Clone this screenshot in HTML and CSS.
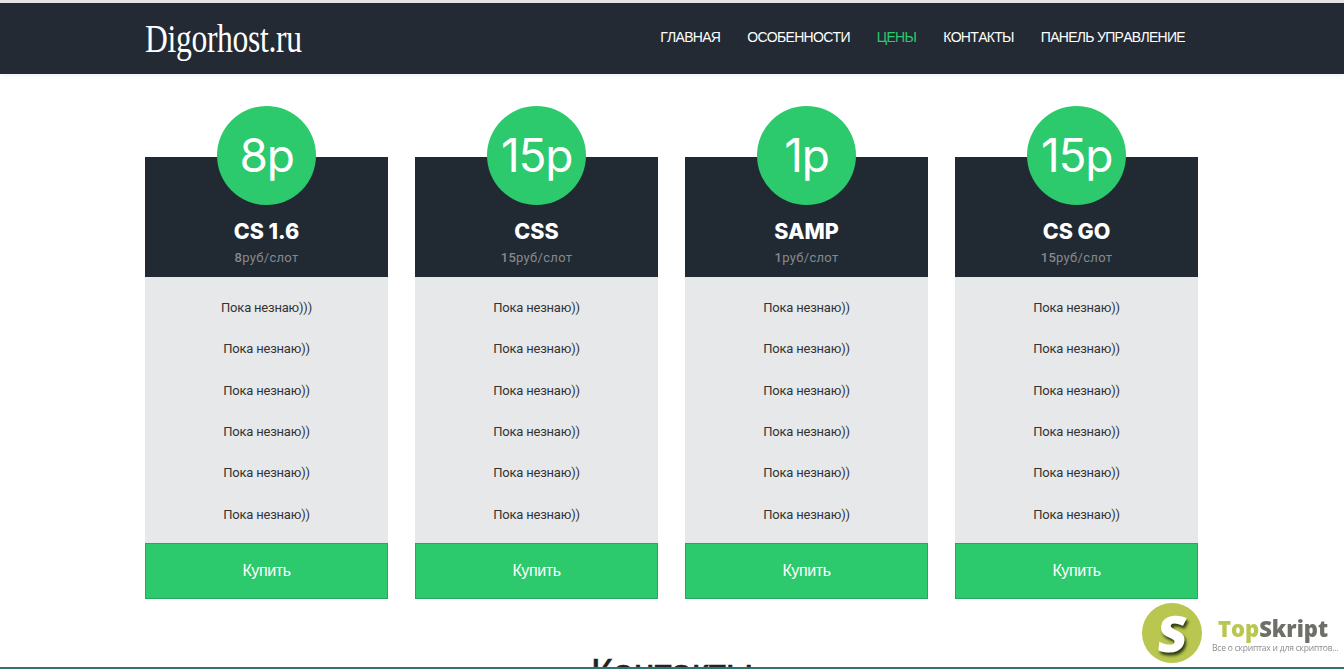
FILE: index.html
```html
<!DOCTYPE html>
<html lang="en">

<head>
    <meta charset="UTF-8">
    <meta name="viewport" content="width=device-width, initial-scale=1.0">
    <title>Digorhost.ru</title>
    <link rel="stylesheet" href="styles.css">
</head>

<body>
    <header class="header">
        <div class="wrap header-row">
            <a href="#" class="logo">Digorhost.ru</a>
            <nav class="menu">
                <a href="#">ГЛАВНАЯ</a>
                <a href="#">ОСОБЕННОСТИ</a>
                <a href="#" class="active">ЦЕНЫ</a>
                <a href="#">КОНТАКТЫ</a>
                <a href="#">ПАНЕЛЬ УПРАВЛЕНИЕ</a>
            </nav>
        </div>
    </header>

    <section class="wrap prices">
        <div class="plan">
            <div class="plan-head">
                <div class="price">8р</div>
                <h3>CS 1.6</h3>
                <p><b>8</b>руб/слот</p>
            </div>
            <ul>
                <li>Пока незнаю)))</li>
                <li>Пока незнаю))</li>
                <li>Пока незнаю))</li>
                <li>Пока незнаю))</li>
                <li>Пока незнаю))</li>
                <li>Пока незнаю))</li>
            </ul>
            <a href="#" class="buy">Купить</a>
        </div>
        <div class="plan">
            <div class="plan-head">
                <div class="price">15р</div>
                <h3>CSS</h3>
                <p><b>15</b>руб/слот</p>
            </div>
            <ul>
                <li>Пока незнаю))</li>
                <li>Пока незнаю))</li>
                <li>Пока незнаю))</li>
                <li>Пока незнаю))</li>
                <li>Пока незнаю))</li>
                <li>Пока незнаю))</li>
            </ul>
            <a href="#" class="buy">Купить</a>
        </div>
        <div class="plan">
            <div class="plan-head">
                <div class="price">1р</div>
                <h3>SAMP</h3>
                <p><b>1</b>руб/слот</p>
            </div>
            <ul>
                <li>Пока незнаю))</li>
                <li>Пока незнаю))</li>
                <li>Пока незнаю))</li>
                <li>Пока незнаю))</li>
                <li>Пока незнаю))</li>
                <li>Пока незнаю))</li>
            </ul>
            <a href="#" class="buy">Купить</a>
        </div>
        <div class="plan">
            <div class="plan-head">
                <div class="price">15р</div>
                <h3>CS GO</h3>
                <p><b>15</b>руб/слот</p>
            </div>
            <ul>
                <li>Пока незнаю))</li>
                <li>Пока незнаю))</li>
                <li>Пока незнаю))</li>
                <li>Пока незнаю))</li>
                <li>Пока незнаю))</li>
                <li>Пока незнаю))</li>
            </ul>
            <a href="#" class="buy">Купить</a>
        </div>
    </section>

    <section class="contacts">
        <h2>Контакты</h2>
    </section>

    <!-- watermark over the page -->
    <div class="badge">
        <div class="badge-icon"><span>S</span></div>
        <div class="badge-text">
            <div class="badge-title"><span>Top</span>Skript</div>
            <div class="badge-sub">Все о скриптах и для скриптов...</div>
        </div>
    </div>
    <div class="bottom-line"></div>
</body>

</html>
```

FILE: styles.css
```css
* {
    margin: 0;
    padding: 0;
    box-sizing: border-box;
}

html,
body {
    height: 100%;
    overflow: hidden;
}

body {
    background-color: #fff;
    border-top: 3px solid #e4e4e4;
    font-family: Roboto, sans-serif;
}

a {
    text-decoration: none;
}

.wrap {
    width: 1053px;
    margin-left: 145px;
}

.header {
    background-color: #232a33;
    height: 71px;
    box-shadow: 0 2px 6px rgba(0, 0, 0, 0.06);
}

.header-row {
    display: flex;
    align-items: center;
    justify-content: space-between;
    height: 100%;
}

.logo {
    color: #fff;
    font-family: "Liberation Serif", serif;
    font-size: 39px;
    letter-spacing: -0.4px;
    line-height: 71px;
    transform: scaleX(0.81);
    transform-origin: left center;
}

.menu {
    display: flex;
    gap: 27px;
    margin-right: 13px;
    margin-bottom: 4px;
}

.menu a {
    color: #fff;
    font-family: "Liberation Sans", sans-serif;
    font-size: 14px;
    font-kerning: none;
    letter-spacing: -0.7px;
}

.menu a.active {
    color: #2cc96d;
}

.prices {
    display: flex;
    gap: 27px;
    padding-top: 83px;
}

.plan {
    width: 243px;
    text-align: center;
}

.plan-head {
    position: relative;
    background-color: #212a33;
    height: 120px;
    padding-top: 61px;
    color: #fff;
}

.price {
    position: absolute;
    top: -51px;
    left: 72px;
    width: 99px;
    height: 99px;
    line-height: 99px;
    border-radius: 50%;
    background-color: #2cc96d;
    font-family: Inter, sans-serif;
    font-weight: 400;
    font-size: 46px;
    letter-spacing: -1.2px;
}

.plan-head h3 {
    font-family: Inter, sans-serif;
    font-weight: 800;
    font-size: 21.5px;
    line-height: 27px;
}

.plan-head p {
    margin-top: 5px;
    color: #85898e;
    font-size: 13px;
    letter-spacing: 0.3px;
    line-height: 16px;
}

.plan-head b {
    font-weight: 500;
}

.plan ul {
    list-style: none;
    background-color: #e7e8ea;
    padding: 10px 0 8px;
}

.plan li {
    height: 41.33px;
    line-height: 41.33px;
    color: #333;
    font-size: 13px;
    letter-spacing: -0.2px;
}

.buy {
    display: block;
    height: 56px;
    line-height: 54px;
    background-color: #2cc96d;
    border: 1px solid #27a75e;
    color: #fff;
    font-family: "Liberation Sans", sans-serif;
    font-size: 16px;
    letter-spacing: -0.4px;
}

.contacts {
    padding-top: 52px;
    text-align: center;
}

.contacts h2 {
    color: #222;
    font-family: "Liberation Sans", sans-serif;
    font-weight: 400;
    font-size: 37.5px;
    line-height: 42px;
    -webkit-text-stroke: 0.6px #222;
}

.badge {
    position: fixed;
    right: 8px;
    bottom: 6px;
    display: flex;
    align-items: center;
    gap: 10px;
}

.badge-icon {
    width: 60px;
    height: 60px;
    line-height: 60px;
    border-radius: 50%;
    background-color: #b9c64f;
    text-align: center;
}

.badge-icon span {
    display: inline-block;
    color: #fff;
    font-family: "Open Sans", sans-serif;
    font-weight: 800;
    font-size: 50px;
    text-shadow: 2px 3px 3px #2c3a10;
    transform: skewX(-6deg);
}

.badge-text {
    width: 124px;
    margin-top: 3px;
}

.badge-title {
    margin-left: 6px;
    color: #6f6f6a;
    font-family: "Open Sans", sans-serif;
    font-weight: 800;
    font-size: 22px;
    line-height: 26px;
    white-space: nowrap;
}

.badge-title span {
    color: #b9c64f;
}

.badge-sub {
    color: #8c8c8c;
    font-family: "Open Sans", sans-serif;
    font-size: 8.5px;
    letter-spacing: -0.2px;
    line-height: 13px;
    white-space: nowrap;
}

.bottom-line {
    position: fixed;
    left: 0;
    right: 0;
    bottom: 0;
    height: 2px;
    background-color: #2f7473;
}
```
